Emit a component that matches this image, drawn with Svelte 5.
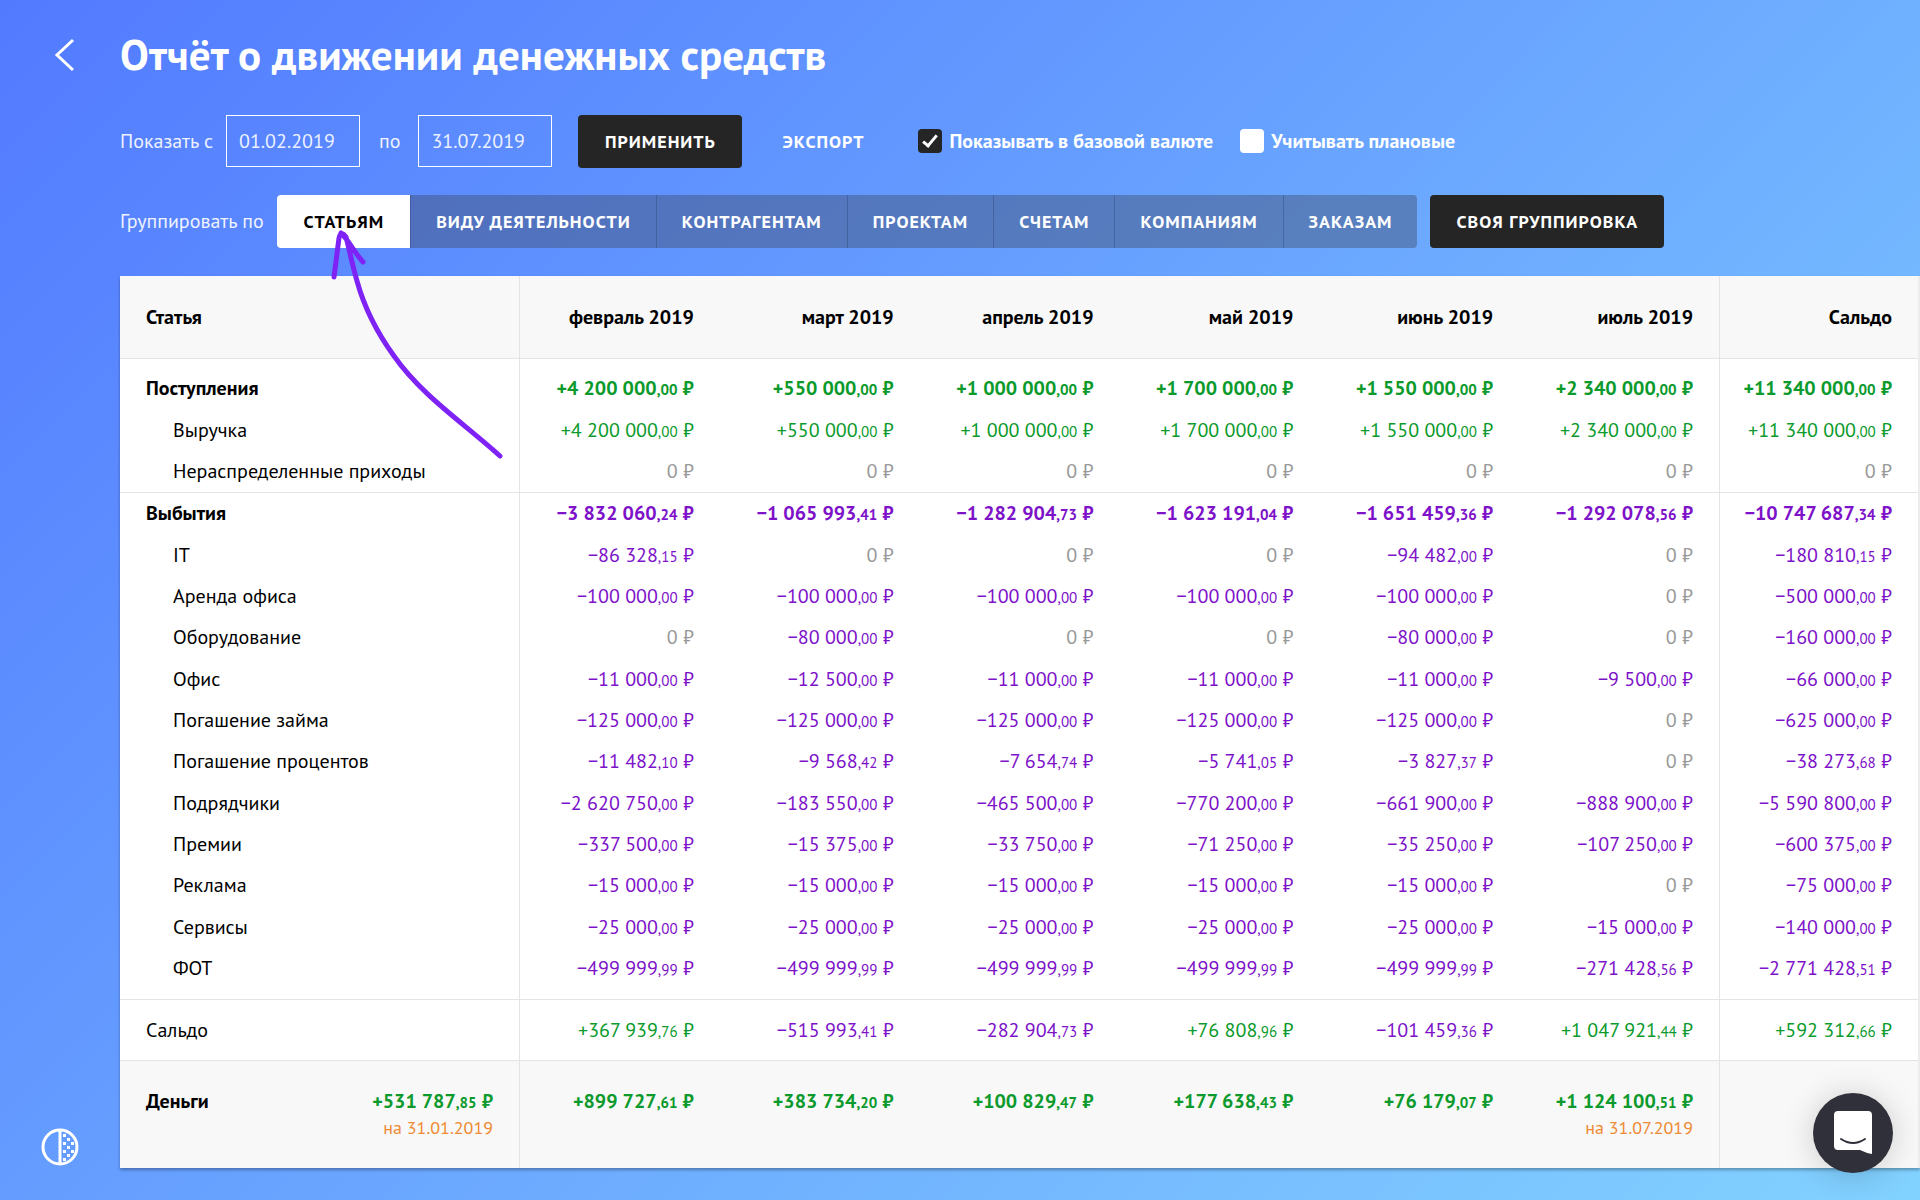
<script>
  let from = $state("01.02.2019");
  let to = $state("31.07.2019");
  let baseCurrency = $state(true);
  let withPlanned = $state(false);
  let grouping = $state("Статьям");

  const groupings = [
    "Статьям",
    "Виду деятельности",
    "Контрагентам",
    "Проектам",
    "Счетам",
    "Компаниям",
    "Заказам",
  ];

  const months = ["февраль", "март", "апрель", "май", "июнь", "июль"];

  // The last value of every row is its total
  const sections = [
    {
      title: "Поступления",
      values: [4200000, 550000, 1000000, 1700000, 1550000, 2340000, 11340000],
      items: [
        { title: "Выручка", values: [4200000, 550000, 1000000, 1700000, 1550000, 2340000, 11340000] },
        { title: "Нераспределенные приходы", values: [0, 0, 0, 0, 0, 0, 0] },
      ],
    },
    {
      title: "Выбытия",
      values: [-3832060.24, -1065993.41, -1282904.73, -1623191.04, -1651459.36, -1292078.56, -10747687.34],
      items: [
        { title: "IT", values: [-86328.15, 0, 0, 0, -94482, 0, -180810.15] },
        { title: "Аренда офиса", values: [-100000, -100000, -100000, -100000, -100000, 0, -500000] },
        { title: "Оборудование", values: [0, -80000, 0, 0, -80000, 0, -160000] },
        { title: "Офис", values: [-11000, -12500, -11000, -11000, -11000, -9500, -66000] },
        { title: "Погашение займа", values: [-125000, -125000, -125000, -125000, -125000, 0, -625000] },
        { title: "Погашение процентов", values: [-11482.1, -9568.42, -7654.74, -5741.05, -3827.37, 0, -38273.68] },
        { title: "Подрядчики", values: [-2620750, -183550, -465500, -770200, -661900, -888900, -5590800] },
        { title: "Премии", values: [-337500, -15375, -33750, -71250, -35250, -107250, -600375] },
        { title: "Реклама", values: [-15000, -15000, -15000, -15000, -15000, 0, -75000] },
        { title: "Сервисы", values: [-25000, -25000, -25000, -25000, -25000, -15000, -140000] },
        { title: "ФОТ", values: [-499999.99, -499999.99, -499999.99, -499999.99, -499999.99, -271428.56, -2771428.51] },
      ],
    },
  ];

  const balance = [367939.76, -515993.41, -282904.73, 76808.96, -101459.36, 1047921.44, 592312.66];
  const money = [899727.61, 383734.2, 100829.47, 177638.43, 76179.07, 1124100.51];

  const split = (value) => {
    const [whole, cents] = Math.abs(value).toFixed(2).split(".");
    const sign = value < 0 ? "−" : "+";
    return { whole: sign + whole.replace(/\B(?=(\d{3})+$)/g, "\u00a0"), cents };
  };
</script>

{#snippet sum(value)}
  {#if value === 0}
    <span class="zero">0&nbsp;₽</span>
  {:else}
    {@const parts = split(value)}
    <span class={value < 0 ? "minus" : "plus"}>{parts.whole}<small>,{parts.cents}</small>&nbsp;₽</span>
  {/if}
{/snippet}

<div class="page">
  <aside>
    <button class="icon" aria-label="Назад">
      <svg width="32" height="34" viewBox="0 0 32 34" fill="none" stroke="#fff" stroke-width="3">
        <path d="M29 2 13 17l16 15" />
      </svg>
    </button>
    <button class="icon" aria-label="Контрастность">
      <svg width="38" height="38" viewBox="0 0 38 38">
        <circle cx="19" cy="19" r="17" fill="none" stroke="#fff" stroke-width="3" />
        <path d="M19 2v34" stroke="#fff" stroke-width="3" />
        <path
          fill="#fff"
          d="M22 6h3v3h-3zM26 10h3v3h-3zM22 14h3v3h-3zM30 14h3v3h-3zM26 18h3v3h-3zM22 22h3v3h-3zM30 22h3v3h-3zM26 26h3v3h-3zM22 30h3v3h-3z"
        />
      </svg>
    </button>
  </aside>

  <main>
    <h1>Отчёт о движении денежных средств</h1>

    <form class="filters" onsubmit={(e) => e.preventDefault()}>
      <label for="from">Показать с</label>
      <input id="from" class="date" type="text" bind:value={from} />
      <label for="to" class="to">по</label>
      <input id="to" class="date" type="text" bind:value={to} />
      <button class="dark apply">Применить</button>
      <button type="button" class="export">Экспорт</button>
      <label class="check">
        <input type="checkbox" bind:checked={baseCurrency} />
        Показывать в базовой валюте
      </label>
      <label class="check">
        <input type="checkbox" bind:checked={withPlanned} />
        Учитывать плановые
      </label>
    </form>

    <div class="grouping">
      <span>Группировать по</span>
      <div class="tabs">
        {#each groupings as name}
          <button class:active={grouping === name} onclick={() => (grouping = name)}>{name}</button>
        {/each}
      </div>
      <button class="dark custom">Своя группировка</button>
    </div>

    <table>
      <colgroup>
        <col class="first" />
        {#each months as month}
          <col />
        {/each}
        <col class="last" />
      </colgroup>
      <thead>
        <tr>
          <th>Статья</th>
          {#each months as month}
            <th>{month} 2019</th>
          {/each}
          <th>Сальдо</th>
        </tr>
      </thead>
      {#each sections as section}
        <tbody>
          <tr class="total">
            <th>{section.title}</th>
            {#each section.values as value}
              <td>{@render sum(value)}</td>
            {/each}
          </tr>
          {#each section.items as item}
            <tr class="item">
              <th>{item.title}</th>
              {#each item.values as value}
                <td>{@render sum(value)}</td>
              {/each}
            </tr>
          {/each}
        </tbody>
      {/each}
      <tbody class="balance">
        <tr>
          <th>Сальдо</th>
          {#each balance as value}
            <td>{@render sum(value)}</td>
          {/each}
        </tr>
      </tbody>
      <tfoot>
        <tr>
          <th>
            <div class="opening">
              <span>Деньги</span>
              <div>
                {@render sum(531787.85)}
                <div class="date-note">на 31.01.2019</div>
              </div>
            </div>
          </th>
          {#each money as value, i}
            <td>
              {@render sum(value)}
              {#if i === money.length - 1}
                <div class="date-note">на 31.07.2019</div>
              {/if}
            </td>
          {/each}
          <td></td>
        </tr>
      </tfoot>
    </table>
  </main>

  <!-- Hint arrow pointing at the first grouping -->
  <svg class="arrow" width="180" height="236" viewBox="0 0 180 236" fill="none">
    <path
      d="M4 47 9 8Q11 0 16 7C20 22 22 34 27 51C35 80 48 104 64 126C92 166 135 194 170 226M11 3C20 12 24 22 33 32"
      stroke="#7f22f5"
      stroke-width="5"
      stroke-linecap="round"
      stroke-linejoin="round"
    />
  </svg>

  <button class="chat" aria-label="Открыть чат">
    <svg width="38" height="44" viewBox="0 0 38 44">
      <path fill="#fff" d="M4 0h30a4 4 0 0 1 4 4v39q-6-1-12-4H4a4 4 0 0 1-4-4V4a4 4 0 0 1 4-4z" />
      <path d="M7 28q12 8 24 0" fill="none" stroke="#2f3039" stroke-width="2" stroke-linecap="round" />
    </svg>
  </button>
</div>

<style>
  :global(body) {
    margin: 0;
  }

  .page {
    position: relative;
    display: flex;
    min-height: 100vh;
    background: linear-gradient(135deg, #527aff, #82d2ff);
    color: #fff;
    font-family: "PT Sans", "Noto Sans", sans-serif;
    font-size: 20px;
  }

  button,
  input {
    font-family: inherit;
  }

  button {
    padding: 0;
    border: 0;
    background: none;
    color: inherit;
    font-size: 18px;
    font-weight: 700;
    letter-spacing: 1px;
    text-transform: uppercase;
    cursor: pointer;
  }

  aside {
    display: flex;
    flex: 0 0 120px;
    flex-direction: column;
    align-items: center;
    justify-content: space-between;
    box-sizing: border-box;
    padding: 38px 0 34px;
  }

  .icon svg {
    display: block;
  }

  main {
    flex: 1;
    min-width: 0;
    padding-bottom: 32px;
  }

  h1 {
    margin: 26px 0 32px;
    font-size: 43px;
    line-height: 56px;
  }

  .filters,
  .grouping {
    display: flex;
    align-items: center;
    height: 54px;
    white-space: nowrap;
  }

  .filters > label:not(.check),
  .grouping > span {
    opacity: 0.9;
  }

  .date {
    box-sizing: border-box;
    width: 134px;
    height: 52px;
    margin-left: 13px;
    padding: 0 12px;
    border: 1px solid #fff;
    background: none;
    color: rgba(255, 255, 255, 0.9);
    font-size: 20px;
  }

  .to {
    margin: 0 5px 0 19px;
  }

  .dark {
    height: 53px;
    border-radius: 4px;
    background: #252525;
    color: #fff;
  }

  .apply {
    width: 164px;
    margin-left: 26px;
  }

  .export {
    margin: 0 54px 0 40px;
  }

  .check {
    display: flex;
    align-items: center;
    gap: 7px;
    margin-right: 27px;
    font-weight: 700;
  }

  .check input {
    appearance: none;
    width: 24px;
    height: 24px;
    margin: 0;
    border-radius: 4px;
    background: #fff;
  }

  .check input:checked {
    background: #252525;
  }

  .check input:checked::after {
    content: "";
    display: block;
    width: 5px;
    height: 12px;
    margin: 3px auto 0;
    border: solid #fff;
    border-width: 0 3px 3px 0;
    transform: rotate(40deg);
  }

  .grouping {
    margin: 26px 0 28px;
  }

  .tabs {
    display: flex;
    height: 53px;
    margin: 0 13px;
    border-radius: 4px;
    background: rgba(64, 75, 100, 0.42);
    overflow: hidden;
  }

  .tabs button {
    padding: 0 25px;
    border-left: 1px solid rgba(40, 60, 110, 0.35);
  }

  .tabs button:first-child {
    padding: 0 26px 0 27px;
    border-left: 0;
  }

  .tabs .active {
    background: #fff;
    color: #000;
  }

  .custom {
    padding: 0 26px;
  }

  table {
    width: 100%;
    table-layout: fixed;
    border-collapse: separate;
    border-spacing: 0;
    border-right: 2px solid #ececec;
    background: #fff;
    box-shadow: 0 2px 3px rgba(0, 0, 0, 0.3);
    color: #000;
    line-height: 41px;
  }

  .first {
    width: 400px;
  }

  .last {
    width: 199px;
  }

  th,
  td {
    padding: 0 26px 0 0;
    text-align: right;
    white-space: nowrap;
  }

  th:first-child {
    padding-left: 26px;
    border-right: 1px solid #e4e4e4;
    text-align: left;
  }

  th:last-child:not(:first-child),
  td:last-child {
    border-left: 1px solid #e4e4e4;
  }

  thead th {
    height: 82px;
    background: #f8f8f8;
    border-bottom: 1px solid #e4e4e4;
  }

  .total {
    font-weight: 700;
  }

  /* 41 + 42 + 41 keeps the average pitch of the rows */
  tr:nth-child(3n + 2) {
    height: 42px;
  }

  thead + tbody .total > * {
    padding-top: 9px;
  }

  tbody tr:last-child > * {
    border-bottom: 1px solid #e4e4e4;
  }

  .item:nth-child(12) > * {
    padding-bottom: 10px;
  }

  .item th,
  .balance th {
    font-weight: 400;
  }

  .item th:first-child {
    padding-left: 53px;
  }

  .balance th,
  .balance td {
    height: 60px;
  }

  tfoot th,
  tfoot td {
    height: 87px;
    padding-top: 20px;
    background: #f8f8f8;
    font-weight: 700;
    vertical-align: top;
  }

  .opening {
    display: flex;
    justify-content: space-between;
    text-align: right;
  }

  .date-note {
    color: #ee8a33;
    font-size: 18px;
    font-weight: 400;
    line-height: 12px;
  }

  small {
    font-size: 15px;
    line-height: 1;
  }

  .plus {
    color: #0b9a2b;
  }

  .minus {
    color: #7d12c9;
  }

  .zero {
    color: #999;
  }

  .arrow {
    position: absolute;
    top: 230px;
    left: 330px;
    pointer-events: none;
  }

  .chat {
    position: fixed;
    right: 27px;
    bottom: 27px;
    display: flex;
    align-items: center;
    justify-content: center;
    width: 80px;
    height: 80px;
    border-radius: 50%;
    background: #2f3039;
    box-shadow: 0 2px 32px rgba(0, 0, 0, 0.18);
  }
</style>
